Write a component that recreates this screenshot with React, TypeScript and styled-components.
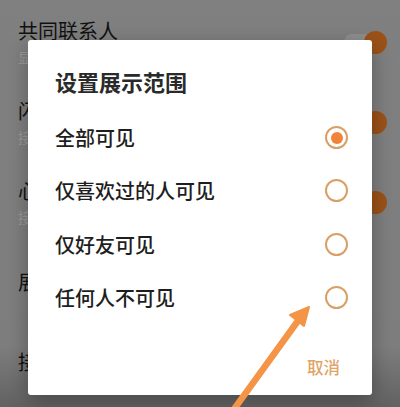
import React from "react";
import styled, { createGlobalStyle } from "styled-components";

const GlobalStyle = createGlobalStyle`
  html, body { margin: 0; padding: 0; }
  body { font-family: "Noto Sans CJK SC", "Noto Sans", sans-serif; }
  * { box-sizing: border-box; }
`;

const Screen = styled.div`
  position: relative;
  width: 400px;
  height: 407px;
  overflow: hidden;
  background: #c4c4c4;
`;

const SettingsList = styled.div`
  display: flex;
  flex-direction: column;
  padding-top: 2px;
`;

const SettingItem = styled.div`
  display: flex;
  align-items: center;
  justify-content: space-between;
  height: 80px;
  padding: 0 16px 0 18px;
`;

const ItemText = styled.div`
  display: flex;
  flex-direction: column;
  gap: 3px;
`;

const ItemTitle = styled.div`
  font-size: 20px;
  line-height: 26px;
  color: #1a1a1a;
`;

const ItemSub = styled.div`
  font-size: 14px;
  line-height: 20px;
  color: #ececec;
`;

const Toggle = styled.div`
  width: 40px;
  height: 16px;
  border-radius: 8px;
  background: #dadada;
  display: flex;
  align-items: center;
  justify-content: flex-end;
`;

const Knob = styled.div`
  width: 23px;
  height: 23px;
  border-radius: 50%;
  background: #f07e26;
  margin-right: -3px;
`;

const Scrim = styled.div`
  position: absolute;
  inset: 0;
  background: linear-gradient(
    to bottom,
    rgba(0, 0, 0, 0.35) 0%,
    rgba(0, 0, 0, 0.36) 85%,
    rgba(0, 0, 0, 0.5) 100%
  );
  display: flex;
  align-items: flex-start;
  padding: 40px 0 0 28px;
`;

const Dialog = styled.div`
  width: 344px;
  height: 355px;
  background: #ffffff;
  border-radius: 3px;
  box-shadow: 0 6px 20px rgba(0, 0, 0, 0.3);
  display: flex;
  flex-direction: column;
`;

const DialogTitle = styled.div`
  padding: 26px 27px 14px 27px;
  font-size: 22px;
  line-height: 31px;
  font-weight: 700;
  color: #2a2a2a;
`;

const OptionRow = styled.div`
  height: 53.3px;
  display: flex;
  align-items: center;
  justify-content: space-between;
  padding: 0 24px 0 27px;
`;

const OptionLabel = styled.span`
  font-size: 20px;
  font-weight: 500;
  color: #1e1e1e;
`;

const Radio = styled.span<{ $checked?: boolean }>`
  width: 23px;
  height: 23px;
  border-radius: 50%;
  border: 2.5px solid #d99f66;
  display: flex;
  align-items: center;
  justify-content: center;
  &::after {
    content: "";
    width: 12px;
    height: 12px;
    border-radius: 50%;
    background: #f0843a;
    display: ${(p) => (p.$checked ? "block" : "none")};
  }
`;

const Footer = styled.div`
  display: flex;
  justify-content: flex-end;
  padding: 32px 32px 0 0;
`;

const CancelButton = styled.span`
  font-size: 16.5px;
  line-height: 22px;
  font-weight: 500;
  color: #e0a466;
`;

const ArrowLayer = styled.svg`
  position: absolute;
  left: 0;
  top: 0;
  pointer-events: none;
`;

const items = [
  { title: "共同联系人", sub: "显示共同联系人", toggle: true },
  { title: "闪聊", sub: "接收闪聊消息", toggle: true },
  { title: "心动提醒", sub: "接收心动提醒", toggle: true },
  { title: "展示范围", sub: "", toggle: false },
  { title: "接收消息通知", sub: "", toggle: false },
];

const options = ["全部可见", "仅喜欢过的人可见", "仅好友可见", "任何人不可见"];

export default function App() {
  return (
    <>
      <GlobalStyle />
      <Screen>
        <SettingsList>
          {items.map((it) => (
            <SettingItem key={it.title}>
              <ItemText>
                <ItemTitle>{it.title}</ItemTitle>
                {it.sub && <ItemSub>{it.sub}</ItemSub>}
              </ItemText>
              {it.toggle && (
                <Toggle>
                  <Knob />
                </Toggle>
              )}
            </SettingItem>
          ))}
        </SettingsList>
        <Scrim>
          <Dialog>
            <DialogTitle>设置展示范围</DialogTitle>
            {options.map((o, i) => (
              <OptionRow key={o}>
                <OptionLabel>{o}</OptionLabel>
                <Radio $checked={i === 0} />
              </OptionRow>
            ))}
            <Footer>
              <CancelButton>取消</CancelButton>
            </Footer>
          </Dialog>
        </Scrim>
        <ArrowLayer width="400" height="407" viewBox="0 0 400 407">
          <line x1="232" y1="412" x2="300" y2="318" stroke="#f39446" strokeWidth="6.5" strokeLinecap="round" />
          <polygon points="309,307 290,315 304,326" fill="#f39446" stroke="#f39446" strokeWidth="2" strokeLinejoin="round" />
        </ArrowLayer>
      </Screen>
    </>
  );
}
